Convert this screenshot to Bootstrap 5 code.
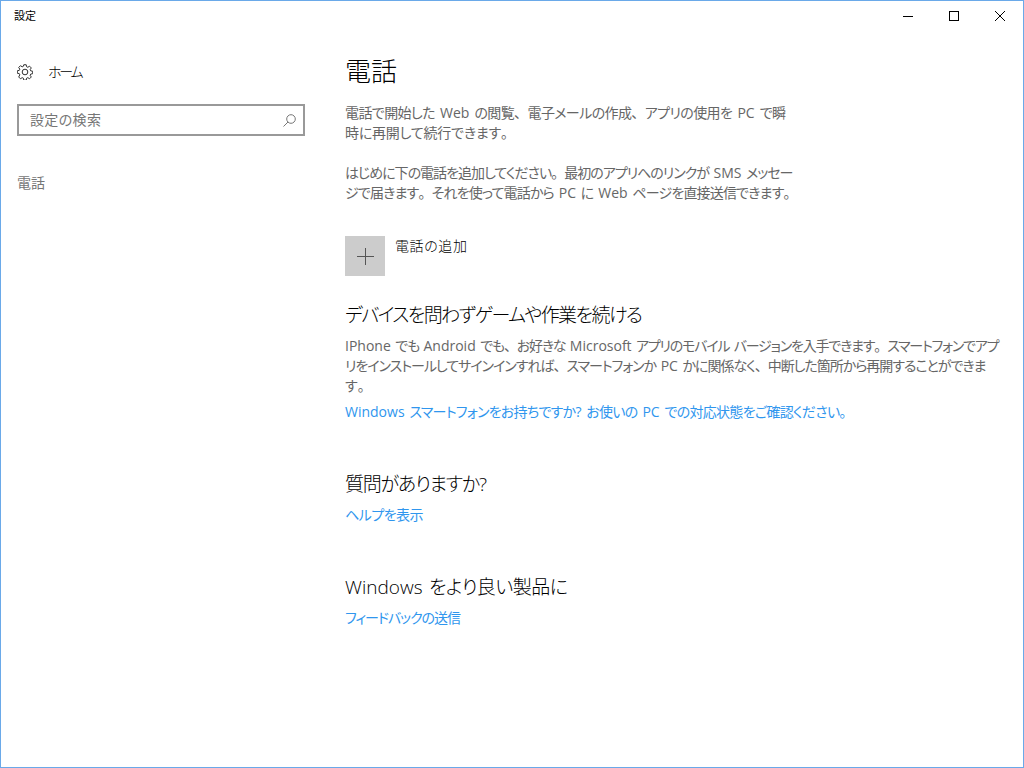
<!DOCTYPE html>
<html lang="ja">
<head>
<meta charset="utf-8">
<title>設定</title>
<link rel="stylesheet" href="https://cdn.jsdelivr.net/npm/bootstrap@5.3.0/dist/css/bootstrap.min.css">
<style>
html,body{height:100%;margin:0;background:#fff;overflow:hidden}
body{font-family:"Open Sans","Noto Sans CJK JP",sans-serif;font-size:14px;line-height:20px;color:#000;font-feature-settings:"palt"}
.app-window{width:1024px;height:768px;border:1px solid #6aa9e9;display:flex;flex-direction:column;background:#fff}
.title-bar{height:31px;flex:none;padding-left:13px;font-size:11px;line-height:30px}
.win-btn{width:46px;height:30px;display:flex;align-items:center;justify-content:center}
.side-pane{width:344px;flex:none;padding:0 16px}
.home-row{height:20px;margin-top:30px;gap:15px;color:#000}
.search-box{width:288px;height:32px;border:2px solid #999;margin-top:22px;padding:0 7px 0 11px;color:#767676}
.side-item{margin-top:37px;color:#767676}
.main-pane{flex:1;min-width:0}
.page-title{font-size:26px;line-height:36px;margin:21px 0 0;font-weight:300;color:#000}
.body-text{color:#666;margin:14px 0 0}
.para-gap{margin-top:20px}
.body-wide{margin-top:8px}
.add-row{margin-top:33px;gap:10px}
.add-tile{width:40px;height:40px;background:#ccc}
.section-title{font-size:19px;line-height:26px;font-weight:300;margin:0;color:#000}
.gap-first{margin-top:26px}
.gap-major{margin-top:49px}
.link-blue{color:#2f96ee;text-decoration:none;display:block;margin-top:8px}
.link-tight{margin-top:6px}
/* each wrapped line of the reference, set to its measured width */
.fit-line{display:block;text-align:justify;text-align-last:justify;text-justify:inter-character;letter-spacing:-1px;word-spacing:2px}
.lat{letter-spacing:0}
.punct{font-feature-settings:normal}
.ln-home{width:33px;letter-spacing:-2.5px;font-weight:300}
.ln-search{width:71px;letter-spacing:0}
.ln-p1a{width:440px}
.ln-p1b{width:169px}
.ln-p2a{width:447px;letter-spacing:-1.5px}
.ln-p2b{width:451px;letter-spacing:-1.5px}
.ln-add{width:72px;letter-spacing:0;font-weight:300}
.ln-s1{width:296px;letter-spacing:-2px}
.ln-w1{width:653px;letter-spacing:-1.5px}
.ln-w2{width:640px;letter-spacing:-1.5px}
.ln-w3{width:19px;letter-spacing:0}
.ln-link{width:507px;letter-spacing:-1.5px}
.ln-s2{width:142px;letter-spacing:-2px}
.ln-help{width:77px;letter-spacing:-1.5px}
.ln-s3{width:222px;letter-spacing:-1px}
.ln-fb{width:114px;letter-spacing:-2px}
</style>
</head>
<body>
<div class="app-window">
  <div class="title-bar d-flex justify-content-between">
    <span>設定</span>
    <div class="d-flex">
      <div class="win-btn"><svg width="10" height="10" viewBox="0 0 10 10"><path d="M0 5.500h10" stroke="#000" fill="none"/></svg></div>
      <div class="win-btn"><svg width="10" height="10" viewBox="0 0 10 10"><rect x=".5" y=".5" width="9" height="9" stroke="#000" fill="none"/></svg></div>
      <div class="win-btn"><svg width="10" height="10" viewBox="0 0 10 10"><path d="M0 0l10 10M10 0L0 10" stroke="#000" fill="none"/></svg></div>
    </div>
  </div>
  <div class="d-flex flex-grow-1">
    <div class="side-pane">
      <div class="home-row d-flex align-items-center">
        <svg width="16" height="16" viewBox="0 0 17 17" fill="none" stroke="#222"><circle cx="8.500" cy="8.500" r="3"/><path d="M7.200.8h2.600l.4 2.100 1.300.6 1.800-1.200 1.900 1.900-1.200 1.800.6 1.300 2.100.4v2.600l-2.100.4-.6 1.300 1.200 1.800-1.900 1.900-1.800-1.200-1.300.6-.4 2.100H7.200l-.4-2.100-1.300-.6-1.800 1.200-1.900-1.900L3 11.500l-.6-1.300-2.100-.4V7.200l2.100-.4L3 5.500 1.800 3.700l1.900-1.900 1.800 1.200 1.300-.6z"/></svg>
        <span class="fit-line ln-home">ホーム</span>
      </div>
      <div class="search-box d-flex align-items-center justify-content-between">
        <span class="fit-line ln-search">設定の検索</span>
        <svg width="13" height="13" viewBox="0 0 13 13" fill="none" stroke="#777"><circle cx="8" cy="5" r="4.300"/><path d="M5 8L.5 12.500"/></svg>
      </div>
      <div class="side-item">電話</div>
    </div>
    <div class="main-pane">
      <h1 class="page-title">電話</h1>
      <p class="body-text">
        <span class="fit-line ln-p1a">電話で開始した <span class="lat">Web</span> の閲覧<span class="punct">、</span>電子メールの作成<span class="punct">、</span>アプリの使用を <span class="lat">PC</span> で瞬</span>
        <span class="fit-line ln-p1b">時に再開して続行できます<span class="punct">。</span></span>
      </p>
      <p class="body-text para-gap">
        <span class="fit-line ln-p2a">はじめに下の電話を追加してください<span class="punct">。</span>最初のアプリへのリンクが <span class="lat">SMS</span> メッセー</span>
        <span class="fit-line ln-p2b">ジで届きます<span class="punct">。</span>それを使って電話から <span class="lat">PC</span> に <span class="lat">Web</span> ページを直接送信できます<span class="punct">。</span></span>
      </p>
      <div class="add-row d-flex">
        <div class="add-tile d-flex align-items-center justify-content-center"><svg width="17" height="17" viewBox="0 0 17 17"><path d="M8.500 0v17M0 8.500h17" stroke="#555" fill="none"/></svg></div>
        <span class="fit-line ln-add">電話の追加</span>
      </div>
      <h2 class="section-title gap-first"><span class="fit-line ln-s1">デバイスを問わずゲームや作業を続ける</span></h2>
      <p class="body-text body-wide">
        <span class="fit-line ln-w1"><span class="lat">IPhone</span> でも <span class="lat">Android</span> でも<span class="punct">、</span>お好きな <span class="lat">Microsoft</span> アプリのモバイル バージョンを入手できます<span class="punct">。</span>スマートフォンでアプ</span>
        <span class="fit-line ln-w2">リをインストールしてサインインすれば<span class="punct">、</span>スマートフォンか <span class="lat">PC</span> かに関係なく<span class="punct">、</span>中断した箇所から再開することができま</span>
        <span class="fit-line ln-w3">す<span class="punct">。</span></span>
      </p>
      <a class="link-blue link-tight" href="#"><span class="fit-line ln-link"><span class="lat">Windows</span> スマートフォンをお持ちですか<span class="lat">?</span> お使いの <span class="lat">PC</span> での対応状態をご確認ください<span class="punct">。</span></span></a>
      <h2 class="section-title gap-major"><span class="fit-line ln-s2">質問がありますか<span class="lat">?</span></span></h2>
      <a class="link-blue" href="#"><span class="fit-line ln-help">ヘルプを表示</span></a>
      <h2 class="section-title gap-major"><span class="fit-line ln-s3"><span class="lat">Windows</span> をより良い製品に</span></h2>
      <a class="link-blue" href="#"><span class="fit-line ln-fb">フィードバックの送信</span></a>
    </div>
  </div>
</div>
</body>
</html>
